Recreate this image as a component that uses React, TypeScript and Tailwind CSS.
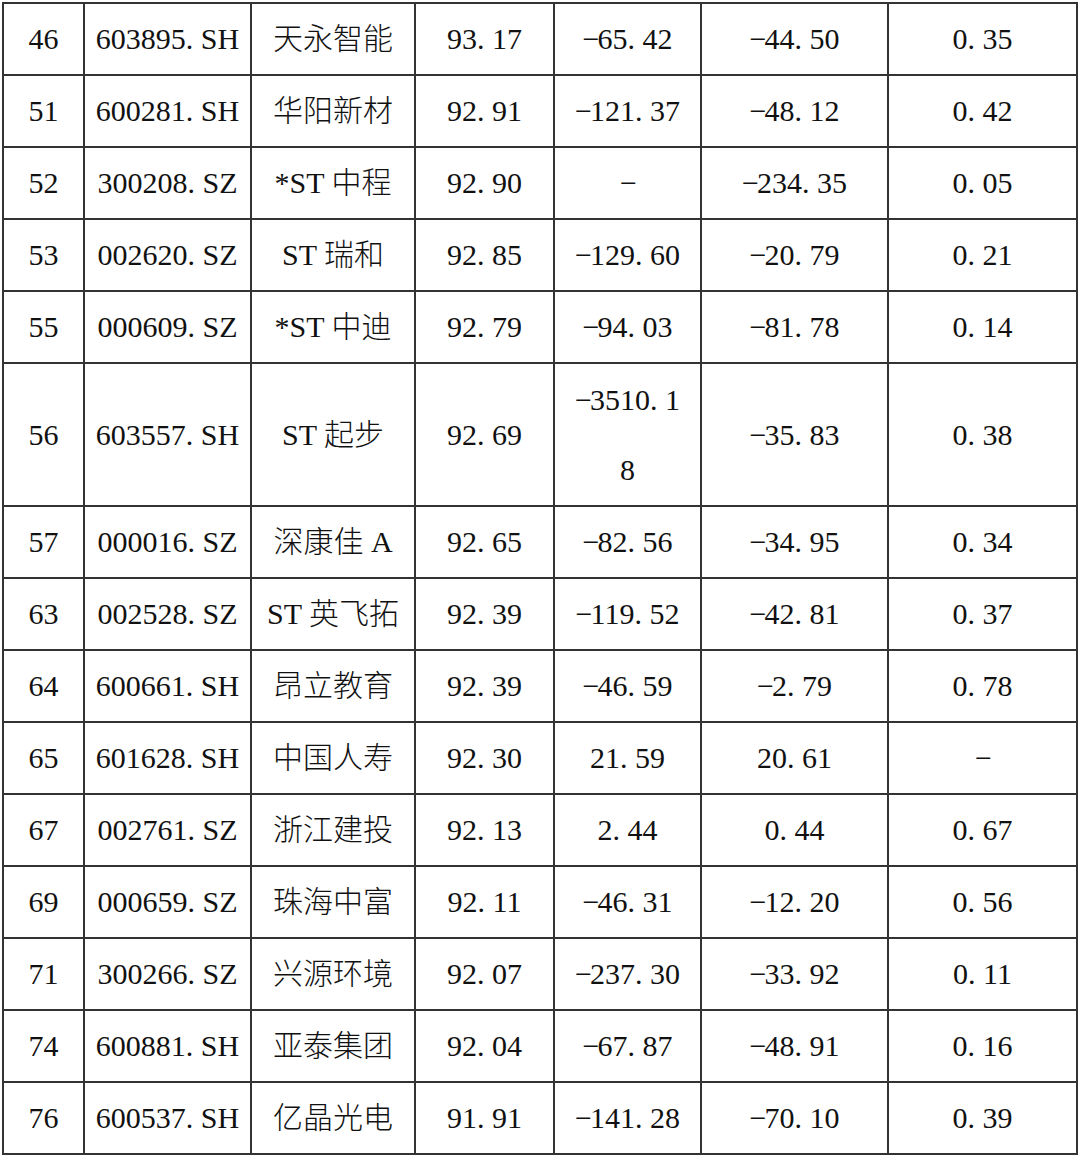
import React from "react";

type Row = [string, string, string, string, string, string, string];

const rows: Row[] = [
  ["46", "603895.SH", "天永智能", "93.17", "-65.42", "-44.50", "0.35"],
  ["51", "600281.SH", "华阳新材", "92.91", "-121.37", "-48.12", "0.42"],
  ["52", "300208.SZ", "*ST 中程", "92.90", "-", "-234.35", "0.05"],
  ["53", "002620.SZ", "ST 瑞和", "92.85", "-129.60", "-20.79", "0.21"],
  ["55", "000609.SZ", "*ST 中迪", "92.79", "-94.03", "-81.78", "0.14"],
  ["56", "603557.SH", "ST 起步", "92.69", "-3510.18", "-35.83", "0.38"],
  ["57", "000016.SZ", "深康佳 A", "92.65", "-82.56", "-34.95", "0.34"],
  ["63", "002528.SZ", "ST 英飞拓", "92.39", "-119.52", "-42.81", "0.37"],
  ["64", "600661.SH", "昂立教育", "92.39", "-46.59", "-2.79", "0.78"],
  ["65", "601628.SH", "中国人寿", "92.30", "21.59", "20.61", "-"],
  ["67", "002761.SZ", "浙江建投", "92.13", "2.44", "0.44", "0.67"],
  ["69", "000659.SZ", "珠海中富", "92.11", "-46.31", "-12.20", "0.56"],
  ["71", "300266.SZ", "兴源环境", "92.07", "-237.30", "-33.92", "0.11"],
  ["74", "600881.SH", "亚泰集团", "92.04", "-67.87", "-48.91", "0.16"],
  ["76", "600537.SH", "亿晶光电", "91.91", "-141.28", "-70.10", "0.39"],
];

function fmt(s: string, keyBase: string) {
  return s.split("").map((ch, i) => {
    if (ch === ".")
      return (
        <span key={keyBase + i} className="inline-block w-[0.5em] text-left">
          .
        </span>
      );
    if (ch === "-")
      return (
        <span key={keyBase + i} className="inline-block w-[0.5em] text-center">
          −
        </span>
      );
    return <React.Fragment key={keyBase + i}>{ch}</React.Fragment>;
  });
}

export default function App() {
  return (
    <div className="w-[1080px] h-[1156px] bg-white overflow-hidden">
      <div
        className="ml-[2px] mt-[2px] inline-grid grid-cols-[81px_167px_164px_139px_147px_187px_189px] border-l-2 border-t-2 border-[#333333] text-[30px] text-[#111111] font-light"
        style={{ fontFamily: '"Liberation Serif", "Noto Sans CJK SC", serif' }}
      >
        {rows.map((r, ri) => {
          const tall = r[0] === "56";
          return r.map((c, ci) => (
            <div
              key={ri + "-" + ci}
              className={
                "flex items-center justify-center text-center border-r-2 border-b-2 border-[#333333] leading-[70px] whitespace-nowrap " +
                (tall ? "h-[143px]" : "h-[72px]")
              }
            >
              {tall && ci === 4 ? (
                <div className="flex flex-col items-center">
                  <span>{fmt("-3510.1", "a")}</span>
                  <span>8</span>
                </div>
              ) : (
                <span>{fmt(c, "c" + ri + ci)}</span>
              )}
            </div>
          ));
        })}
      </div>
    </div>
  );
}
